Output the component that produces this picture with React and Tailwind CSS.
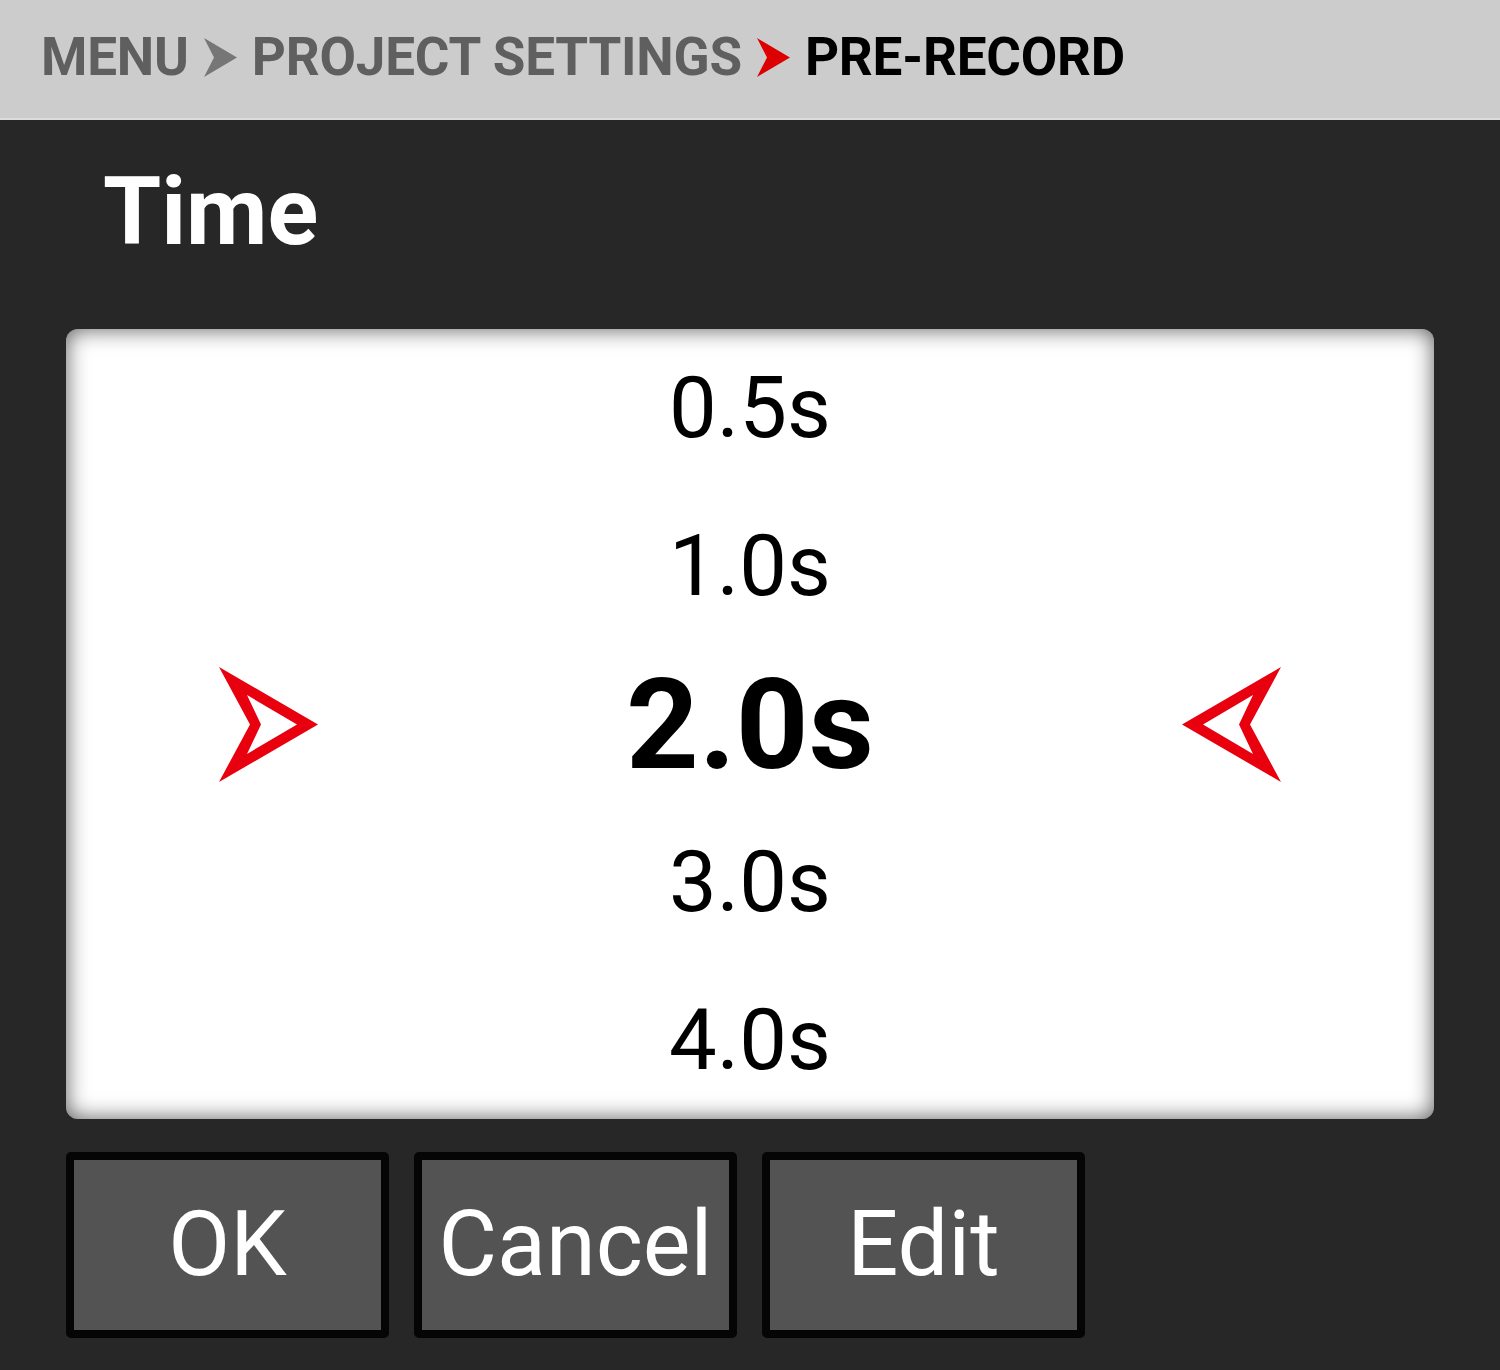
import React from "react";

const Chevron = ({ color }) => (
    <svg width="33" height="39" viewBox="0 0 33 39" className="shrink-0">
        <path d="M0 0 L33 19.5 L0 39 L10 19.5 Z" fill={color} />
    </svg>
);

const PointerArrow = ({ flip }) => (
    <svg width="101" height="117" viewBox="0 0 101 117" className={flip ? "shrink-0 -scale-x-100" : "shrink-0"}>
        <path
            fillRule="evenodd"
            fill="#e8000f"
            d="M1 1 L100 58.5 L1 116 L32 58.5 Z M29 29 L79 58.5 L29 88 L43 58.5 Z"
        />
    </svg>
);

const values = ["0.5s", "1.0s", "2.0s", "3.0s", "4.0s"];
const selected = 2;

export default function App() {
    return (
        <div className="w-[1500px] h-[1370px] bg-[#272727] flex flex-col font-['Roboto',sans-serif]">
            {/* breadcrumb */}
            <div className="h-[120px] shrink-0 bg-[#cccccc] border-b-2 border-[#dcdcdc] flex items-center pl-[41px] gap-[15px] pb-[3px]">
                <span className="text-[53px] leading-none font-bold text-[#5f5f5f] tracking-[-0.2px]">MENU</span>
                <Chevron color="#767676" />
                <span className="text-[53px] leading-none font-bold text-[#5f5f5f] tracking-[-0.2px]">PROJECT SETTINGS</span>
                <Chevron color="#dd0000" />
                <span className="text-[53px] leading-none font-bold text-black tracking-[-0.2px]">PRE-RECORD</span>
            </div>

            <div className="px-[66px] flex flex-col">
                <h1 className="pl-[37px] pt-[45px] text-[94px] leading-none font-bold text-white">Time</h1>

                <div className="mt-[70px] h-[790px] bg-white rounded-[12px] shadow-[inset_0_0_22px_rgba(0,0,0,0.65)] flex flex-col">
                    {values.map((v, idx) =>
                        idx === selected ? (
                            <div key={idx} className="h-[158px] flex items-center justify-between px-[152px]">
                                <PointerArrow />
                                <span className="text-[127px] leading-none font-bold text-black">{v}</span>
                                <PointerArrow flip />
                            </div>
                        ) : (
                            <div key={idx} className="h-[158px] flex items-center justify-center">
                                <span className="text-[85px] leading-none text-black">{v}</span>
                            </div>
                        )
                    )}
                </div>

                <div className="mt-[33px] flex gap-[25px]">
                    {["OK", "Cancel", "Edit"].map((label) => (
                        <button
                            key={label}
                            className="w-[323px] h-[186px] bg-[#535353] border-[8px] border-[#050505] rounded-[5px] flex items-center justify-center text-[90px] leading-none text-white"
                        >
                            {label}
                        </button>
                    ))}
                </div>
            </div>
        </div>
    );
}
